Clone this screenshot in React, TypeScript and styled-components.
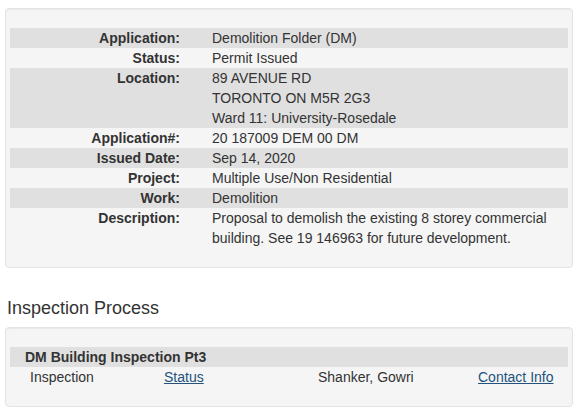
import React from "react"
import styled, { createGlobalStyle } from "styled-components"

const GlobalStyle = createGlobalStyle`
  body {
    margin: 0;
    background: #fff;
    color: #333;
    font-family: "Liberation Sans", Arial, Helvetica, sans-serif;
    font-size: 14px;
    line-height: 20px;
  }
`

const Page = styled.div`
  padding: 8px 6px 0 5px;
`

const Well = styled.div`
  background-color: #f5f5f5;
  border: 1px solid #e3e3e3;
  border-radius: 4px;
  box-shadow: inset 0 1px 1px rgba(0, 0, 0, 0.05);
  padding: 19px 4px;
  margin-bottom: 20px;
`

const DetailRow = styled.div<{ $striped?: boolean }>`
  display: grid;
  grid-template-columns: 184px 1fr;
  background-color: ${(p) => (p.$striped ? "#e0e0e0" : "transparent")};
`

const Label = styled.div`
  font-weight: bold;
  text-align: right;
  padding-right: 14px;
`

const Value = styled.div`
  padding-left: 18px;
  padding-right: 10px;
`

const Heading = styled.h4`
  font-size: 18px;
  font-weight: normal;
  line-height: 20px;
  margin: 30px 0 9px 2px;
`

const GroupHeader = styled.div`
  background-color: #e0e0e0;
  font-weight: bold;
  padding-left: 15px;
`

const InspectionRow = styled.div`
  display: grid;
  grid-template-columns: 154px 154px 160px 1fr;
  & > :first-child {
    padding-left: 20px;
  }
`

const Link = styled.a`
  color: #23527c;
  text-decoration: underline;
  cursor: pointer;
`

const details: { label: string; value: string[] }[] = [
  { label: "Application:", value: ["Demolition Folder (DM)"] },
  { label: "Status:", value: ["Permit Issued"] },
  { label: "Location:", value: ["89 AVENUE RD", "TORONTO ON M5R 2G3", "Ward 11: University-Rosedale"] },
  { label: "Application#:", value: ["20 187009 DEM 00 DM"] },
  { label: "Issued Date:", value: ["Sep 14, 2020"] },
  { label: "Project:", value: ["Multiple Use/Non Residential"] },
  { label: "Work:", value: ["Demolition"] },
  {
    label: "Description:",
    value: ["Proposal to demolish the existing 8 storey commercial building. See 19 146963 for future development."],
  },
]

const App = () => (
  <Page>
    <GlobalStyle />
    <Well>
      {details.map((d, i) => (
        <DetailRow key={d.label} $striped={i % 2 === 0}>
          <Label>{d.label}</Label>
          <Value>
            {d.value.map((line) => (
              <div key={line}>{line}</div>
            ))}
          </Value>
        </DetailRow>
      ))}
    </Well>
    <Heading>Inspection Process</Heading>
    <Well>
      <GroupHeader>DM Building Inspection Pt3</GroupHeader>
      <InspectionRow>
        <div>Inspection</div>
        <div>
          <Link>Status</Link>
        </div>
        <div>Shanker, Gowri</div>
        <div>
          <Link>Contact Info</Link>
        </div>
      </InspectionRow>
    </Well>
  </Page>
)

export default App
